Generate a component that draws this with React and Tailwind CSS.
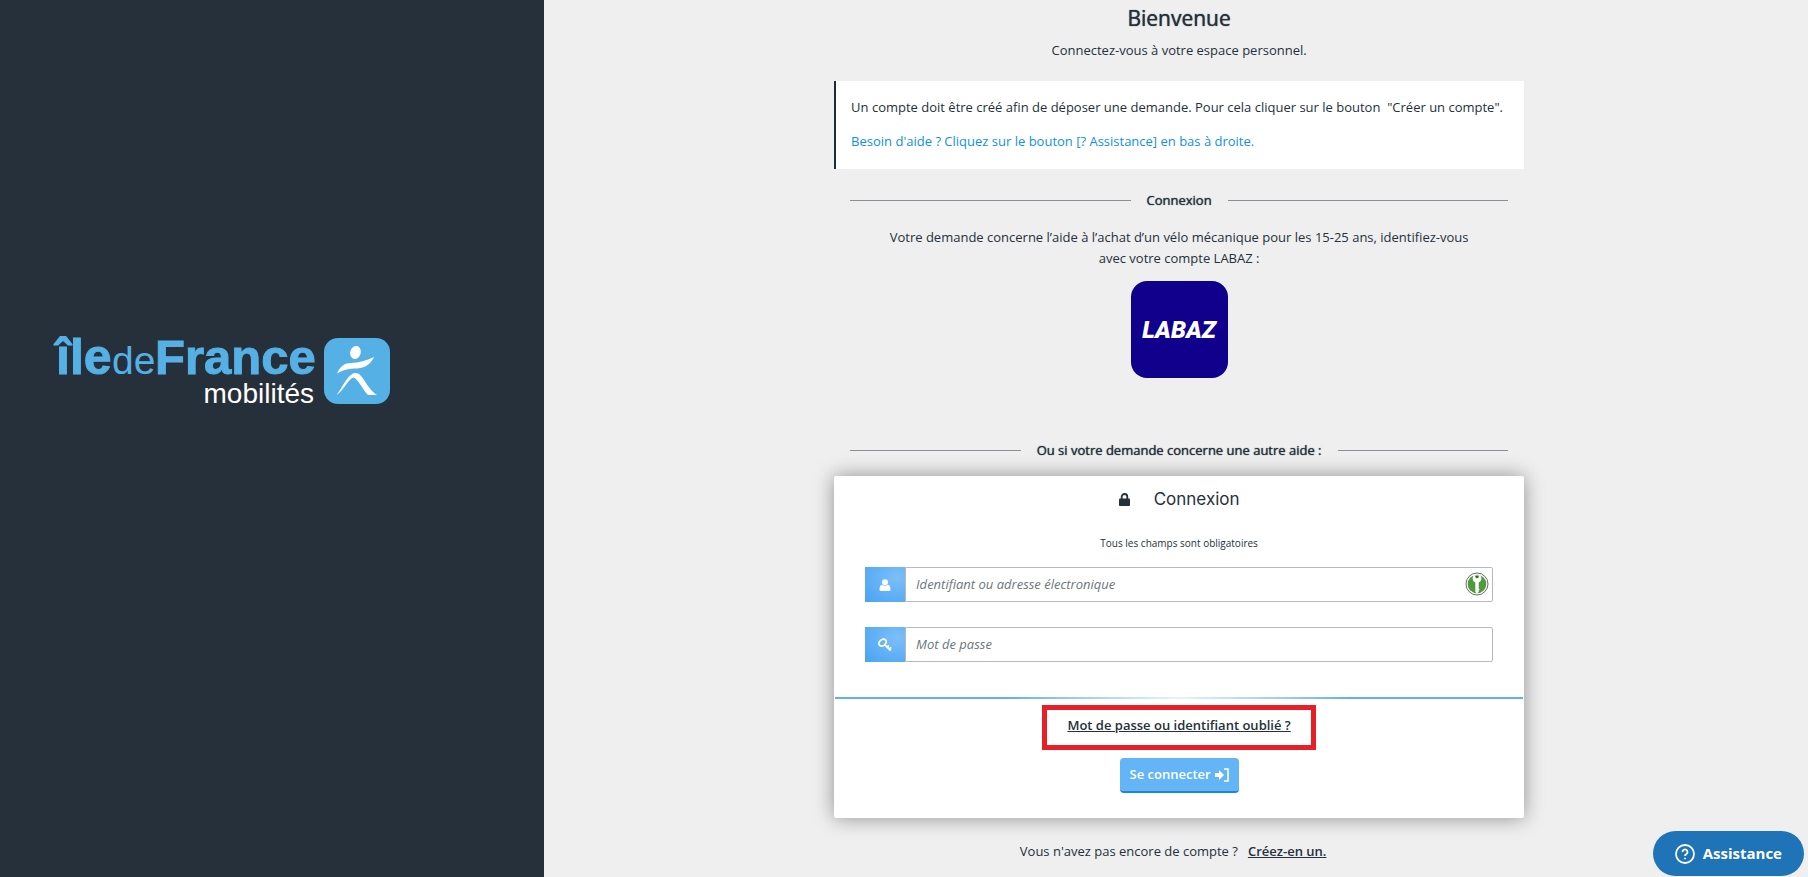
import { useState } from "react";

const IdfmLogo = () => (
  <svg
    viewBox="0 0 334 68"
    className="h-auto w-[334px] max-w-full overflow-visible"
    role="img"
    aria-label="île de France mobilités"
  >
    <g fontFamily="'Liberation Sans', Arial, sans-serif">
      <g fontWeight="700" fill="#55b0e5" stroke="#55b0e5" strokeWidth="1">
        <text x="0" y="36" fontSize="50">
          île
        </text>
        <text x="99" y="36" fontSize="49">
          France
        </text>
      </g>
      <text x="56" y="36" fontSize="39" fill="#55b0e5">
        de
      </text>
      <text x="258" y="65" fontSize="28" fill="#fff" textAnchor="end">
        mobilités
      </text>
    </g>
    <rect x="268" y="0" width="66" height="66" rx="14" fill="#55b0e5" />
    <g fill="#fff">
      <ellipse cx="299.500" cy="14.500" rx="5.300" ry="6.600" transform="rotate(15 299.500 14.500)" />
      <path d="M281 35.500C284 28 289 25 295 25C303 25 310 22.500 318 19C314 28 307 30.500 298 30.500C291 31 286 32.500 281 35.500Z" />
      <path d="M280.500 57C286 50.500 292 35.500 299 35C307 34.500 309 48.500 321 57H312C308 53.500 303 42.500 298 39.500C292 40.500 288 52.500 280.500 57Z" />
    </g>
  </svg>
);

const SectionTitle = ({ children }) => (
  <div className="mx-4 flex items-center gap-4">
    <span className="h-px flex-1 bg-[#8a8f94]" />
    <h2 className="font-medium leading-5 [text-shadow:0_0_1px_currentColor]">{children}</h2>
    <span className="h-px flex-1 bg-[#8a8f94]" />
  </div>
);

const UserIcon = () => (
  <svg viewBox="0 0 12 12" className="size-3" fill="#fff" aria-hidden="true">
    <circle cx="6" cy="3.200" r="3" />
    <path d="M3 5.800Q6 7.800 9 5.800Q11.500 6.500 11.500 10.500Q11.500 12 9.500 12H2.500Q.5 12 .5 10.500Q.5 6.500 3 5.800Z" />
  </svg>
);

const KeyIcon = () => (
  <svg viewBox="0 0 14 14" className="size-3.5" fill="none" stroke="#fff" aria-hidden="true">
    <ellipse cx="4.600" cy="4.600" rx="4" ry="3" strokeWidth="1.700" transform="rotate(-40 4.600 4.600)" />
    <path d="M6.500 6.500L12.800 12.500" strokeWidth="2" />
    <path d="M9.200 9.200L11 7.500M11.300 11.200L13.200 9.400" strokeWidth="1.700" />
  </svg>
);

const LockIcon = () => (
  <svg viewBox="0 0 11 13" className="h-[13px] w-[11px]" aria-hidden="true">
    <path d="M2.700 6V3.800a2.800 2.800 0 0 1 5.600 0V6" fill="none" stroke="#25303b" strokeWidth="1.800" />
    <rect y="5.500" width="11" height="7.500" rx="1" fill="#25303b" />
  </svg>
);

const LoginIcon = () => (
  <svg viewBox="0 0 14 14" className="size-3.5" aria-hidden="true">
    <path d="M0 5h4V2l5 5-5 5V9H0z" fill="#fff" />
    <path d="M9 1h4v12H9" fill="none" stroke="#fff" strokeWidth="1.600" />
  </svg>
);

const KeeperIcon = () => (
  <svg viewBox="0 0 24 24" className="size-6" aria-hidden="true">
    <circle cx="12" cy="12" r="11" fill="#fff" stroke="#6b6b6b" strokeWidth="1" />
    <circle cx="12" cy="12" r="9.300" fill="#4f9a3a" />
    <path
      d="M8.500 3L7.500 6.500Q7.500 9 10.300 10.500V20L12 21.500L13.700 20V18.500L14.700 17.500L13.700 16.500V10.500Q16.500 9 16.500 6.500L15.500 3Z"
      fill="#fff"
    />
    <path d="M10.300 3.500h3.400v1.700L12 6.500l-1.700-1.300z" fill="#2f6b22" />
  </svg>
);

const Field = ({ id, label, type, icon, value, onChange, children }) => (
  <div className="relative flex h-[35px]">
    <label
      htmlFor={id}
      className="flex w-10 items-center justify-center bg-radial-[at_80%_30%] from-[#7cbff9] to-[#48a3f2]"
    >
      <span className="sr-only">{label}</span>
      {icon}
    </label>
    <input
      id={id}
      type={type}
      value={value}
      onChange={onChange}
      placeholder={label}
      className="min-w-0 flex-1 rounded-r-xs border border-[#b4babf] bg-white px-2.5 placeholder:italic placeholder:text-[#6c757d] focus:outline-none"
    />
    {children}
  </div>
);

const App = () => {
  const [identifiant, setIdentifiant] = useState("");
  const [motDePasse, setMotDePasse] = useState("");

  return (
    <div className="flex min-h-screen bg-[#efefef] font-['Open_Sans',sans-serif] text-[13px] text-[#25303b]">
      <aside className="w-[30.1%] shrink-0 bg-[#26303a] px-14 pt-[338px]">
        <IdfmLogo />
      </aside>

      <main className="flex-1 pl-1.5">
        <div className="mx-auto w-full max-w-[690px]">
          <header className="pt-1 text-center">
            <h1 className="text-[21px] font-medium leading-7 [text-shadow:0_0_1px_currentColor]">
              Bienvenue
            </h1>
            <p className="mt-2 leading-5">Connectez-vous à votre espace personnel.</p>
          </header>

          <div className="mt-[21px] space-y-3.5 border-l-2 border-[#1c2a3a] bg-white px-[15px] pb-[18px] pt-4 leading-5">
            <p className="whitespace-pre-wrap">
              {'Un compte doit être créé afin de déposer une demande. Pour cela cliquer sur le bouton  "Créer un compte".'}
            </p>
            <p className="text-[#0f92dd]">
              Besoin d'aide ? Cliquez sur le bouton [? Assistance] en bas à droite.
            </p>
          </div>

          {/* Connexion LABAZ */}
          <section className="mt-[21px]">
            <SectionTitle>Connexion</SectionTitle>
            <p className="mx-auto mt-[17px] max-w-[600px] text-center leading-[21px]">
              Votre demande concerne l’aide à l’achat d’un vélo mécanique pour les 15-25 ans, identifiez-vous avec votre compte LABAZ :
            </p>
            <a
              href="#labaz"
              className="mx-auto mt-3 flex size-[97px] items-center justify-center rounded-2xl bg-[#10008c] font-['Roboto',sans-serif] text-2xl font-black italic text-white"
            >
              LABAZ
            </a>
          </section>

          {/* Formulaire de connexion */}
          <section className="mt-[62px]">
            <SectionTitle>Ou si votre demande concerne une autre aide :</SectionTitle>
            <form
              className="mt-4 rounded-xs bg-white pb-[25px] shadow-[0_0_20px_rgba(0,0,0,0.4)]"
              onSubmit={(e) => e.preventDefault()}
            >
              <h3 className="flex items-center justify-center gap-6 pt-[11px] font-['Inter',sans-serif] text-[17px] leading-6">
                <LockIcon />
                Connexion
              </h3>
              <p className="mt-6 text-center text-[10px] leading-4">
                Tous les champs sont obligatoires
              </p>
              <div className="mt-4 space-y-[25px] px-[31px]">
                <Field
                  id="identifiant"
                  type="text"
                  label="Identifiant ou adresse électronique"
                  icon={<UserIcon />}
                  value={identifiant}
                  onChange={(e) => setIdentifiant(e.target.value)}
                >
                  <span className="absolute right-1 top-[5px]">
                    <KeeperIcon />
                  </span>
                </Field>
                <Field
                  id="mot-de-passe"
                  type="password"
                  label="Mot de passe"
                  icon={<KeyIcon />}
                  value={motDePasse}
                  onChange={(e) => setMotDePasse(e.target.value)}
                />
              </div>
              <div className="mx-px mt-[35px] h-0.5 bg-linear-to-r from-[#63b0f0] from-25% via-[#e6f3fe] to-[#63b0f0] to-75%" />
              <div className="mt-1.5 flex flex-col items-center gap-2">
                <div className="border-[5px] border-[#e81f27] px-5 pb-2.5 pt-[5px]">
                  <a href="#oubli" className="block font-semibold leading-5 underline">
                    Mot de passe ou identifiant oublié ?
                  </a>
                </div>
                <button
                  type="submit"
                  className="flex h-[35px] items-center gap-1 rounded border-b-2 border-[#1b86e0] bg-[#64b5f6] px-2.5 font-semibold text-white"
                >
                  Se connecter
                  <LoginIcon />
                </button>
              </div>
            </form>
          </section>

          <p className="mt-[23px] text-center leading-5">
            Vous n'avez pas encore de compte ?
            <a href="#creer" className="ml-2.5 mr-3 font-semibold underline">
              Créez-en un.
            </a>
          </p>
        </div>
      </main>

      <button
        type="button"
        className="fixed bottom-px right-1 flex h-[45px] items-center gap-2 rounded-full bg-[#1f73b7] px-[22px] text-[15px] font-bold text-white"
      >
        <svg viewBox="0 0 20 20" className="size-5" fill="none" stroke="#fff" strokeWidth="1.800" aria-hidden="true">
          <circle cx="10" cy="10" r="9" />
          <path d="M7.500 8a2.500 2.500 0 1 1 3.800 2.100c-.9.500-1.300.9-1.300 1.900" />
          <circle cx="10" cy="14.500" r=".6" fill="#fff" strokeWidth="1" />
        </svg>
        Assistance
      </button>
    </div>
  );
};

export default App;
